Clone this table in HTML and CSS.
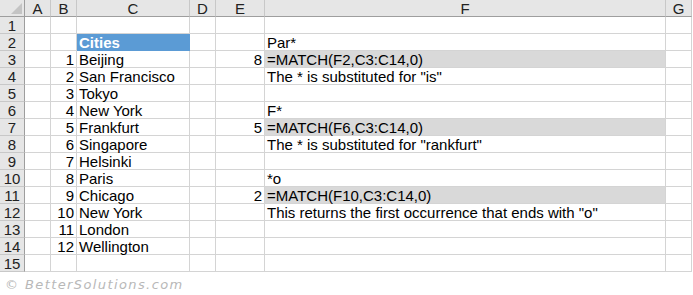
FILE: index.html
```html
<!DOCTYPE html>
<html lang="en">
  <head>
    <meta charset="utf-8" />
    <title>MATCH with wildcards</title>
    <link rel="stylesheet" href="styles.css">
  </head>

  <body>
    <div class="sheet">
      <!-- column headers -->
      <div class="hd corner"></div>
      <div class="hd">A</div>
      <div class="hd">B</div>
      <div class="hd">C</div>
      <div class="hd">D</div>
      <div class="hd">E</div>
      <div class="hd">F</div>
      <div class="hd">G</div>

      <div class="rh">1</div><div></div><div></div><div></div><div></div><div></div><div></div><div></div>
      <div class="rh">2</div><div></div><div></div><div class="title">Cities</div><div></div><div></div><div>Par*</div><div></div>
      <div class="rh">3</div><div></div><div class="num">1</div><div>Beijing</div><div></div><div class="num">8</div><div class="shade">=MATCH(F2,C3:C14,0)</div><div></div>
      <div class="rh">4</div><div></div><div class="num">2</div><div>San Francisco</div><div></div><div></div><div>The * is substituted for "is"</div><div></div>
      <div class="rh">5</div><div></div><div class="num">3</div><div>Tokyo</div><div></div><div></div><div></div><div></div>
      <div class="rh">6</div><div></div><div class="num">4</div><div>New York</div><div></div><div></div><div>F*</div><div></div>
      <div class="rh">7</div><div></div><div class="num">5</div><div>Frankfurt</div><div></div><div class="num">5</div><div class="shade">=MATCH(F6,C3:C14,0)</div><div></div>
      <div class="rh">8</div><div></div><div class="num">6</div><div>Singapore</div><div></div><div></div><div>The * is substituted for "rankfurt"</div><div></div>
      <div class="rh">9</div><div></div><div class="num">7</div><div>Helsinki</div><div></div><div></div><div></div><div></div>
      <div class="rh">10</div><div></div><div class="num">8</div><div>Paris</div><div></div><div></div><div>*o</div><div></div>
      <div class="rh">11</div><div></div><div class="num">9</div><div>Chicago</div><div></div><div class="num">2</div><div class="shade">=MATCH(F10,C3:C14,0)</div><div></div>
      <div class="rh">12</div><div></div><div class="num">10</div><div>New York</div><div></div><div></div><div>This returns the first occurrence that ends with "o"</div><div></div>
      <div class="rh">13</div><div></div><div class="num">11</div><div>London</div><div></div><div></div><div></div><div></div>
      <div class="rh">14</div><div></div><div class="num">12</div><div>Wellington</div><div></div><div></div><div></div><div></div>
      <div class="rh">15</div><div></div><div></div><div></div><div></div><div></div><div></div><div></div>
    </div>

    <p class="copy">&copy; BetterSolutions.com</p>
  </body>
</html>
```

FILE: styles.css
```css
body {
  margin: 0;
  background: #ffffff;
  font-family: "Liberation Sans", Arial, sans-serif;
  color: #000;
}

.sheet {
  display: grid;
  grid-template-columns: 25px 26px 26px 113px 26px 49px 401px 26px;
  grid-auto-rows: 17px;
  width: 692px;
  font-size: 15px;
  line-height: 17px;
}

.sheet > div {
  box-sizing: border-box;
  border-right: 1px solid #d4d4d4;
  border-bottom: 1px solid #d4d4d4;
  padding: 0 2px;
  white-space: nowrap;
  overflow: visible;
}

.hd {
  background: #e6e6e6;
  text-align: center;
  color: #222;
  border-right-color: #c8c8c8 !important;
  border-bottom-color: #9e9e9e !important;
}

.corner {
  position: relative;
  border-right-color: #9e9e9e !important;
}

/* little select-all triangle */
.corner::after {
  content: "";
  position: absolute;
  right: 2px;
  bottom: 2px;
  border-left: 11px solid transparent;
  border-bottom: 11px solid #c4c4c4;
}

.rh {
  background: #e6e6e6;
  text-align: center;
  color: #222;
  border-right-color: #9e9e9e !important;
  border-bottom-color: #c8c8c8 !important;
}

.num {
  text-align: right;
}

.title {
  background: #5b9bd5;
  color: #fff;
  font-weight: bold;
  border-color: #5b9bd5 !important;
}

.shade {
  background: #d9d9d9;
}

.copy {
  margin: 5px 0 0 5px;
  font-family: "DejaVu Sans", sans-serif;
  font-style: italic;
  font-size: 13px;
  letter-spacing: 1.4px;
  color: #b8b8b8;
}
```
